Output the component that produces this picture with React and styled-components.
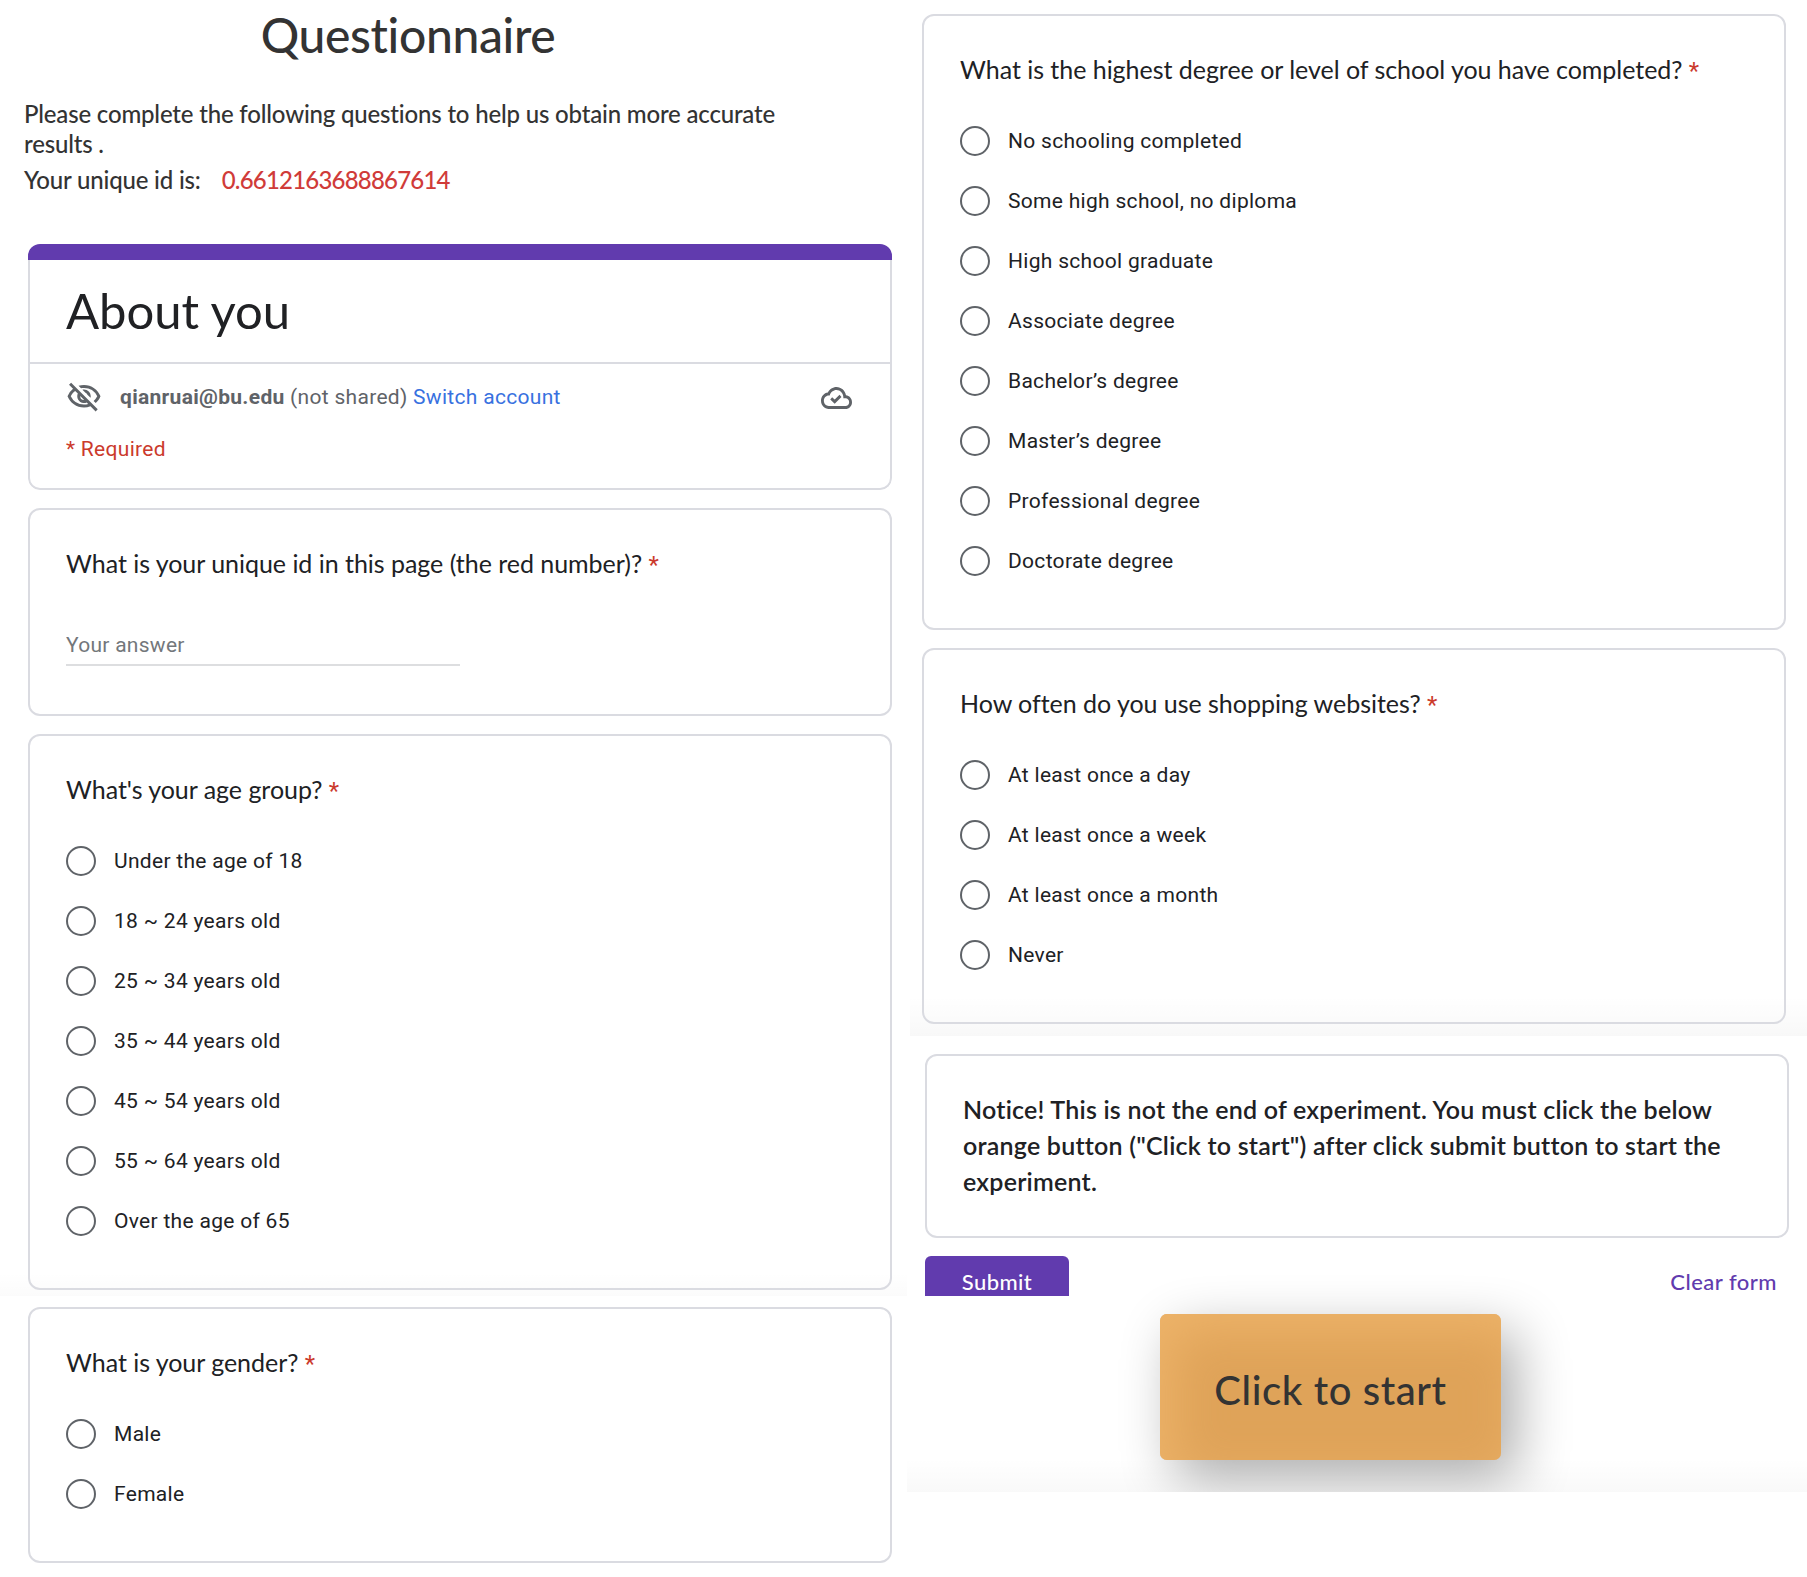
import React from "react";
import styled, { createGlobalStyle } from "styled-components";
import { MdOutlineVisibilityOff } from "react-icons/md";

const display = `Lato, "Open Sans", sans-serif`;
const text = `Roboto, "Liberation Sans", sans-serif`;
const ink = "#202124";
const muted = "#5f6368";
const purple = "#613bae";
const line = "#dadbe1";
const red = "#cb3a2c";

const GlobalStyle = createGlobalStyle`
  *, *::before, *::after { box-sizing: border-box; }
  body { margin: 0; background: #fff; }
`;

const Page = styled.main`
  display: grid;
  grid-template-columns: 907px 900px;
  width: 1807px;
  height: 1577px;
  overflow: hidden;
  color: ${ink};
  font-family: ${text};
  font-size: 21px;
  letter-spacing: 0.3px;
`;

const LeftColumn = styled.div`
  display: flex;
  flex-direction: column;
  background: linear-gradient(transparent, rgba(0, 0, 0, 0.014)) 0 1272px / 100% 24px no-repeat;
`;

const RightColumn = styled.div`
  display: flex;
  flex-direction: column;
`;

const Intro = styled.header`
  display: flex;
  flex-direction: column;
  width: 816px;
  height: 244px;
  padding: 1px 0 0 24px;
  color: #333;
  font-family: ${display};
  font-weight: 500;
  font-size: 24px;
  line-height: 30px;
  letter-spacing: -0.18px;
  font-variant-ligatures: none;
`;

const PageTitle = styled.h1`
  margin: 0 0 30px -24px;
  font-size: 48px;
  font-weight: 500;
  line-height: 68px;
  letter-spacing: -0.35px;
  text-align: center;
`;

const IntroText = styled.p`
  margin: 0 0 6px;
`;

const UniqueId = styled.span`
  margin-left: 21px;
  color: #d03b39;
  letter-spacing: -0.8px;
`;

const CardStack = styled.div`
  display: flex;
  flex-direction: column;
  gap: 18px;
  width: 864px;
  margin-left: ${(p) => p.$inset}px;
`;

const FormHeader = styled.section`
  height: 246px;
  border-radius: 12px;
  overflow: hidden;
`;

const AccentBar = styled.div`
  height: 16px;
  background: ${purple};
`;

const FormHeaderBody = styled.div`
  height: 230px;
  border: 2px solid ${line};
  border-top: 0;
  border-radius: 0 0 12px 12px;
`;

const FormTitle = styled.h2`
  height: 104px;
  margin: 0;
  padding-left: 36px;
  border-bottom: 2px solid ${line};
  font: 400 49px/101px ${display};
  letter-spacing: 0;
`;

const AccountRow = styled.div`
  display: flex;
  align-items: center;
  height: 65px;
  padding: 0 38px 0 36px;
  color: ${muted};
`;

const HiddenIcon = styled(MdOutlineVisibilityOff)`
  width: 36px;
  height: 36px;
  margin: 1px 18px 0 0;
`;

const AccountText = styled.div`
  flex: 1;
  white-space: pre;
`;

const SwitchLink = styled.a`
  color: #3871e0;
`;

const CloudIcon = styled.svg`
  width: 31px;
  height: 22px;
  margin-top: 3px;
`;

const RequiredNote = styled.div`
  padding-left: 36px;
  color: ${red};
  line-height: 40px;
`;

const Card = styled.section`
  padding: 35px 36px 37px;
  border: 2px solid ${line};
  border-radius: 12px;
  margin-top: ${(p) => p.$pull || 0}px;
`;

const Question = styled.h3`
  height: 36px;
  margin: 0 0 24px;
  font: 400 25px/36px ${display};
  letter-spacing: -0.03px;
  font-variant-ligatures: none;
`;

const Star = styled.span`
  color: ${red};
  font-family: ${text};
  font-size: 24px;
`;

const AnswerInput = styled.input`
  display: block;
  width: 394px;
  height: 39px;
  margin: 46px 0 11px;
  padding: 0 0 2px;
  border: 0;
  border-bottom: 2px solid #dddee0;
  outline: 0;
  background: transparent;
  font: 400 21px/35px ${text};
  letter-spacing: 0.27px;
  &::placeholder { color: #73777b; opacity: 1; }
`;

const Option = styled.label`
  display: flex;
  align-items: center;
  gap: 18px;
  height: 60px;
`;

const Radio = styled.input.attrs({ type: "radio" })`
  appearance: none;
  width: 30px;
  height: 30px;
  margin: 0;
  border: 2px solid ${muted};
  border-radius: 50%;
`;

const SurveyPanel = styled.div`
  height: 1036px;
  margin-left: 3px;
  padding-top: 14px;
  background: linear-gradient(transparent, rgba(0, 0, 0, 0.027)) 0 100% / 100% 40px no-repeat;
`;

const SubmitPanel = styled.div`
  height: 260px;
  padding-top: 18px;
  overflow: hidden;
`;

const Notice = styled.p`
  margin: 0 -6px 0 0;
  font: 600 25px/36px ${display};
  letter-spacing: 0.22px;
  font-variant-ligatures: none;
`;

const Actions = styled.div`
  display: flex;
  align-items: center;
  justify-content: space-between;
  padding-right: 12px;
`;

const SubmitButton = styled.button`
  width: 144px;
  height: 52px;
  padding: 0;
  border: 0;
  border-radius: 6px;
  background: ${purple};
  color: #fff;
  font: 500 22px/52px ${display};
  letter-spacing: 0.4px;
`;

const ClearButton = styled.button`
  padding: 0;
  border: 0;
  background: none;
  color: ${purple};
  font: 500 22px/52px ${display};
  letter-spacing: 0.48px;
`;

const StartPanel = styled.div`
  height: 196px;
  padding: 18px 0 0 253px;
  background: linear-gradient(transparent, rgba(0, 0, 0, 0.025)) 0 100% / 100% 34px no-repeat;
  clip-path: inset(-40px 0 0 0);
`;

const StartButton = styled.button`
  width: 341px;
  height: 146px;
  padding: 5px 0 0;
  border: 0;
  border-radius: 7px;
  background: #dfa359;
  box-shadow: inset 14px 18px 48px #edb369, 15px 18px 54px rgba(0, 0, 0, 0.33);
  color: #333;
  font: 500 40px/1 ${display};
  letter-spacing: 0.6px;
`;

function ChoiceCard({ title, options, pull }) {
  return (
    <Card $pull={pull}>
      <Question>
        {title} <Star>*</Star>
      </Question>
      {options.map((option) => (
        <Option key={option}>
          <Radio name={title} />
          {option}
        </Option>
      ))}
    </Card>
  );
}

const ages = [
  "Under the age of 18",
  "18 ~ 24 years old",
  "25 ~ 34 years old",
  "35 ~ 44 years old",
  "45 ~ 54 years old",
  "55 ~ 64 years old",
  "Over the age of 65",
];

const degrees = [
  "No schooling completed",
  "Some high school, no diploma",
  "High school graduate",
  "Associate degree",
  "Bachelor’s degree",
  "Master’s degree",
  "Professional degree",
  "Doctorate degree",
];

const frequencies = ["At least once a day", "At least once a week", "At least once a month", "Never"];

export default function App() {
  return (
    <>
      <GlobalStyle />
      <Page>
        <LeftColumn>
          <Intro>
            <PageTitle>Questionnaire</PageTitle>
            <IntroText>
              Please complete the following questions to help us obtain more accurate results .
            </IntroText>
            <IntroText>
              Your unique id is:<UniqueId>0.6612163688867614</UniqueId>
            </IntroText>
          </Intro>
          <CardStack $inset={28}>
            <FormHeader>
              <AccentBar />
              <FormHeaderBody>
                <FormTitle>About you</FormTitle>
                <AccountRow>
                  <HiddenIcon />
                  <AccountText>
                    <b>qianruai@bu.edu</b> (not shared) <SwitchLink>Switch account</SwitchLink>
                  </AccountText>
                  <CloudIcon viewBox="0 4 24 16" preserveAspectRatio="none">
                    <path
                      fill="currentColor"
                      d="M19.35 10.04C18.67 6.59 15.64 4 12 4 9.11 4 6.6 5.64 5.35 8.04 2.34 8.36 0 10.91 0 14c0 3.31 2.69 6 6 6h13c2.76 0 5-2.24 5-5 0-2.64-2.05-4.78-4.65-4.96zM19 17.8H6c-2.1 0-3.8-1.7-3.8-3.8s1.7-3.8 3.8-3.8h.75C7.4 7.9 9.48 6.2 12 6.2c2.95 0 5.3 2.4 5.3 5.3v.7H19c1.6 0 2.8 1.25 2.8 2.8s-1.2 2.8-2.8 2.8z"
                    />
                    <path d="M7.9 12.2l2.7 2.5 4.5-4.3" fill="none" stroke="currentColor" strokeWidth="2.2" />
                  </CloudIcon>
                </AccountRow>
                <RequiredNote>* Required</RequiredNote>
              </FormHeaderBody>
            </FormHeader>
            <Card>
              <Question>
                What is your unique id in this page (the red number)? <Star>*</Star>
              </Question>
              <AnswerInput placeholder="Your answer" />
            </Card>
            <ChoiceCard title="What's your age group?" options={ages} />
            <ChoiceCard title="What is your gender?" options={["Male", "Female"]} pull={-1} />
          </CardStack>
        </LeftColumn>
        <RightColumn>
          <SurveyPanel>
            <CardStack $inset={12}>
              <ChoiceCard
                title="What is the highest degree or level of school you have completed?"
                options={degrees}
              />
              <ChoiceCard title="How often do you use shopping websites?" options={frequencies} />
            </CardStack>
          </SurveyPanel>
          <SubmitPanel>
            <CardStack $inset={18}>
              <Card>
                <Notice>
                  Notice! This is not the end of experiment. You must click the below orange button
                  ("Click to start") after click submit button to start the experiment.
                </Notice>
              </Card>
              <Actions>
                <SubmitButton>Submit</SubmitButton>
                <ClearButton>Clear form</ClearButton>
              </Actions>
            </CardStack>
          </SubmitPanel>
          <StartPanel>
            <StartButton>Click to start</StartButton>
          </StartPanel>
        </RightColumn>
      </Page>
    </>
  );
}
